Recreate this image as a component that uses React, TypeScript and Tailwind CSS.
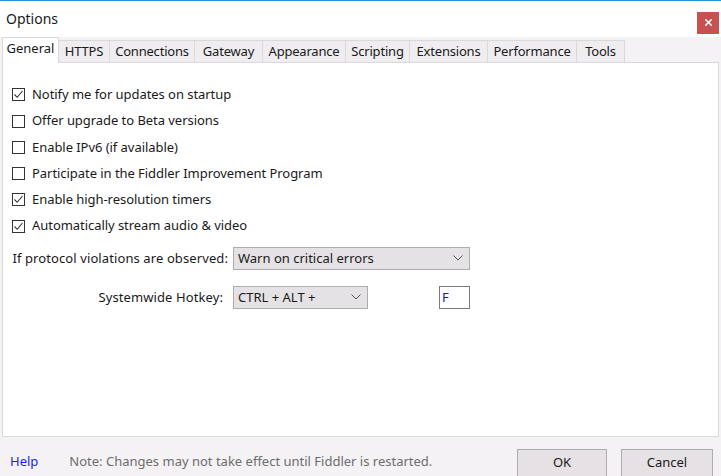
import { X } from "lucide-react";

const tabs = [
  { name: "General", w: 57 },
  { name: "HTTPS", w: 51 },
  { name: "Connections", w: 85 },
  { name: "Gateway", w: 68 },
  { name: "Appearance", w: 83 },
  { name: "Scripting", w: 64 },
  { name: "Extensions", w: 78 },
  { name: "Performance", w: 89 },
  { name: "Tools", w: 48 },
];

const options = [
  { label: "Notify me for updates on startup", checked: true },
  { label: "Offer upgrade to Beta versions", checked: false },
  { label: "Enable IPv6 (if available)", checked: false },
  { label: "Participate in the Fiddler Improvement Program", checked: false },
  { label: "Enable high-resolution timers", checked: true },
  { label: "Automatically stream audio & video", checked: true },
];

function CheckBox({ checked }: { checked: boolean }) {
  return (
    <div className="w-[13px] h-[13px] border border-[#333333] bg-white flex items-center justify-center shrink-0">
      {checked && (
        <svg width="11" height="11" viewBox="0 0 11 11">
          <path d="M1.5 5.5 L4.2 8.3 L9.5 2" fill="none" stroke="#333" strokeWidth="1.1" />
        </svg>
      )}
    </div>
  );
}

function Chevron() {
  return (
    <svg width="10" height="6" viewBox="0 0 10 6">
      <path d="M0.5 0.5 L5 5 L9.5 0.5" fill="none" stroke="#555" strokeWidth="1" />
    </svg>
  );
}

export default function App() {
  return (
    <div className="w-[721px] h-[476px] flex flex-col bg-[#f5f2f5] border-t border-[#2b90d9] overflow-hidden font-['Segoe_UI','Noto_Sans',sans-serif] text-[#1a1a1a]">
      {/* title bar */}
      <div className="h-[36px] bg-white flex items-center justify-between pl-[6px] pr-[2px] shrink-0">
        <span className="text-[14px] -mt-[1px]">Options</span>
        <div className="w-[22px] h-[22px] bg-[#c75050] flex items-center justify-center mt-[7px]">
          <X size={11} strokeWidth={3.5} className="text-white" />
        </div>
      </div>

      {/* tabs */}
      <div className="h-[25px] flex items-end pl-[2px] shrink-0">
        {tabs.map((t, i) =>
          i === 0 ? (
            <div
              key={t.name}
              className="h-[26px] bg-white border-t border-l border-r border-[#d9d9d9] flex items-center justify-center text-[13px] -mb-[1px] relative z-10"
              style={{ width: t.w }}
            >
              <span className="-mt-[3px]">{t.name}</span>
            </div>
          ) : (
            <div
              key={t.name}
              className="h-[22px] bg-[#f0edf0] border-t border-r border-[#d9d9d9] flex items-center justify-center text-[13px] tracking-[-0.2px]"
              style={{ width: t.w }}
            >
              {t.name}
            </div>
          )
        )}
      </div>

      {/* content */}
      <div className="flex-1 mx-[2px] bg-white border border-[#d9d9d9] pt-[17px] pl-[8px]">
        <div className="flex flex-col gap-[12.8px] pt-[8px]">
          {options.map((o) => (
            <div key={o.label} className="flex items-center gap-[7px] h-[13.5px] pl-[1px]">
              <CheckBox checked={o.checked} />
              <span className="text-[13px] font-['Noto_Sans',sans-serif] tracking-[-0.05px]">{o.label}</span>
            </div>
          ))}
        </div>

        <div className="mt-[14px] flex items-center">
          <span className="w-[218px] text-right text-[13px] font-['Noto_Sans',sans-serif] tracking-[0.1px] pr-[1px]">
            If protocol violations are observed:
          </span>
          <div className="ml-[4px] w-[237px] h-[23px] bg-[#e5e2e5] border border-[#adadad] flex items-center justify-between pl-[4px] pr-[6px] text-[13px]">
            <span>Warn on critical errors</span>
            <Chevron />
          </div>
        </div>

        <div className="mt-[16px] flex items-center">
          <span className="w-[212px] text-right text-[13px] font-['Noto_Sans',sans-serif] tracking-[0.1px]">
            Systemwide Hotkey:
          </span>
          <div className="ml-[10px] w-[135px] h-[23px] bg-[#e5e2e5] border border-[#adadad] flex items-center justify-between pl-[4px] pr-[6px] text-[13px]">
            <span>CTRL + ALT +</span>
            <Chevron />
          </div>
          <div className="ml-[71px] w-[31px] h-[23px] bg-white border border-[#7a7a7a] flex items-center pl-[2px] text-[13px] text-[#1a1a8a]">
            F
          </div>
        </div>
      </div>

      {/* footer */}
      <div className="h-[39px] flex items-center shrink-0 relative">
        <span className="ml-[10px] text-[13px] text-[#1a1aff] mt-[10px]">Help</span>
        <span className="ml-[31px] text-[13px] text-[#6d6d6d] mt-[10px]">
          Note: Changes may not take effect until Fiddler is restarted.
        </span>
        <div className="ml-auto flex gap-[14px] mr-[8px] mt-[12px] self-start pt-[0px]">
          <div className="w-[90px] h-[28px] bg-[#e5e1e5] border border-[#adadad] flex items-center justify-center text-[13px]">
            OK
          </div>
          <div className="w-[92px] h-[28px] bg-[#e5e1e5] border border-[#adadad] flex items-center justify-center text-[13px]">
            Cancel
          </div>
        </div>
      </div>
    </div>
  );
}
